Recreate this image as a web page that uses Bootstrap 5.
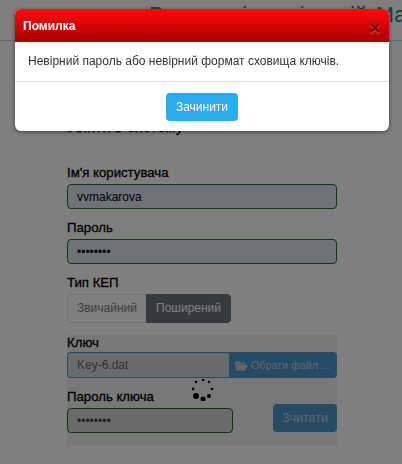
<!DOCTYPE html>
<html lang="uk">
<head>
<meta charset="utf-8">
<title>Помилка</title>
<link href="https://cdn.jsdelivr.net/npm/bootstrap@5.3.0/dist/css/bootstrap.min.css" rel="stylesheet">
<style>
html,body{height:464px;overflow:hidden;background:#fff;font-family:"Liberation Sans",Arial,sans-serif;font-size:14px;color:#212529}
.modal-backdrop.show{opacity:.5;background:#000}
.top-head{height:41px;border-bottom:1px solid #b8d4d4;padding-left:149px;white-space:nowrap;overflow:hidden;font-size:21.5px;line-height:30px;color:#2f7f86;word-spacing:3px}
.login-wrap{padding:75px 65px 0 67px}
.login-title{font-size:15px;line-height:22px;font-weight:400;margin:0 0 27px;color:#000;-webkit-text-stroke:.3px #000}
.fld-label{display:block;font-size:13.2px;font-weight:400;line-height:15px;margin:0 0 4px;color:#000;-webkit-text-stroke:.3px #000}
.fld-input{height:25px;border:1px solid #1f6b2a;border-radius:4px;background:#dde5f3;font-size:12px;padding:0 9px;width:100%;color:#000;display:block}
.fld-gap{margin-bottom:11px}
.type-btn{font-size:12px;line-height:27px;height:29px;padding:0 9px}
.type-off{color:#808080;background:#fff;border:1px solid #dee2e6;border-right:0;border-radius:4px 0 0 4px}
.type-on{color:#fff;background:#6c757d;border:1px solid #6c757d;border-radius:0 4px 4px 0}
.key-panel{position:relative;margin-top:12px;height:110px}
.key-veil{position:absolute;inset:0;background:rgba(0,0,0,.06);z-index:5}
.key-file{height:26px;display:flex}
.key-name{flex:1;border:1px solid #3f9fd8;border-right:0;border-radius:4px 0 0 4px;background:#e4e5e6;font-size:12px;line-height:24px;padding-left:9px;color:#6c6c6c}
.key-pick{width:108px;background:#4fa0d8;color:#d0dde6;border-radius:0 4px 4px 0;font-size:10.7px;padding-left:6px;white-space:nowrap;display:flex;align-items:center;gap:3px}
.key-read{background:#4fa0d8;color:#d0dde6;border:0;border-radius:4px;height:28px;width:64px;font-size:12.5px;padding:0;margin-bottom:1px}
.key-pass{width:166px;background:#e4e5e6;color:#444}
.spin-dots{position:absolute;left:125px;top:44px;width:22px;height:22px;z-index:6}
.modal-card{width:374px;margin:9px 0 0 15px;background:#fff;border-radius:6px;box-shadow:0 1px 4px rgba(0,0,0,.5);overflow:hidden}
.modal-top{height:33px;background:linear-gradient(#ff0a0a,#a80000);color:#fff;font-weight:700;font-size:12px;padding:0 8px;display:flex;justify-content:space-between;align-items:center}
.modal-msg{height:40px;line-height:38px;padding-left:13px;font-size:12px;color:#333;border-bottom:1px solid #e0e0e0}
.modal-foot{height:49px;display:flex;justify-content:center;align-items:center}
.close-btn{background:#2eaaf0;color:#fff;border:0;border-radius:4px;width:72px;height:28px;font-size:12px;padding:0}
.x-mark{font-size:21px;font-weight:700;line-height:21px;color:#000;text-shadow:0 1px 0 #fff;opacity:.35;margin-top:3px}
</style>
</head>
<body>
<div class="top-head">Реєстрація у лікарній Ма</div>
<div class="login-wrap">
  <h5 class="login-title">Увійти в систему</h5>
  <div class="fld-gap"><label class="fld-label">Ім'я користувача</label><div class="fld-input d-flex align-items-center">vvmakarova</div></div>
  <div class="fld-gap"><label class="fld-label">Пароль</label><div class="fld-input d-flex align-items-center">••••••••</div></div>
  <label class="fld-label">Тип КЕП</label>
  <div class="d-flex"><div class="type-btn type-off">Звичайний</div><div class="type-btn type-on">Поширений</div></div>
  <div class="key-panel">
    <div class="key-veil"></div>
    <label class="fld-label" style="margin-bottom:2px">Ключ</label>
    <div class="key-file"><div class="key-name">Key-6.dat</div><div class="key-pick"><svg width="13" height="11" viewBox="0 0 24 20"><path fill="#d0dde6" d="M2 2h7l2 3h8v3H6L1 17V3zM6 9h18l-5 10H1z"/></svg>Обрати файл ...</div></div>
    <div class="d-flex justify-content-between align-items-end" style="margin-top:11px">
      <div><label class="fld-label">Пароль ключа</label><div class="fld-input key-pass d-flex align-items-center">••••••••</div></div>
      <button class="key-read" type="button">Зчитати</button>
    </div>
    <svg class="spin-dots" viewBox="0 0 22 22">
      <g fill="#000"><circle cx="11" cy="1" r="1.2"/><circle cx="17" cy="3" r="1.2"/><circle cx="20" cy="10" r="1.3"/><circle cx="17" cy="17" r="2"/><circle cx="11" cy="20" r="2.5"/><circle cx="4" cy="17" r="3"/><circle cx="1" cy="10" r="1.4"/><circle cx="4" cy="3" r="1.2"/></g>
    </svg>
  </div>
</div>
<div class="modal-backdrop show"></div>
<div class="modal d-block" tabindex="-1">
  <div class="modal-card">
    <div class="modal-top"><span>Помилка</span><span class="x-mark">×</span></div>
    <div class="modal-msg">Невірний пароль або невірний формат сховища ключів.</div>
    <div class="modal-foot"><button class="close-btn" type="button">Зачинити</button></div>
  </div>
</div>
<script src="https://cdn.jsdelivr.net/npm/bootstrap@5.3.0/dist/js/bootstrap.bundle.min.js"></script>
</body>
</html>
